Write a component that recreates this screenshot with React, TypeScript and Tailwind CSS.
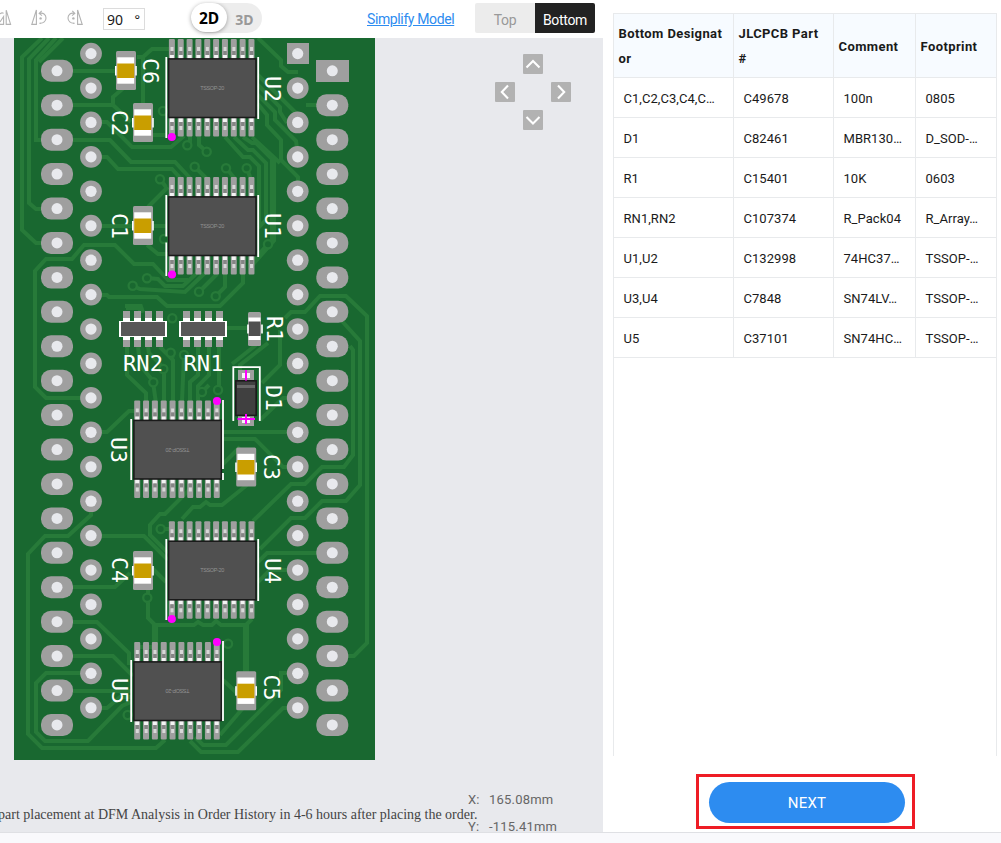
import React from "react";

const PITCH = 34.43;
const rows20 = Array.from({ length: 20 }, (_, i) => i);
const pins10 = Array.from({ length: 10 }, (_, i) => i);

const TRACES = [
  "42,38 22,57 22,230 36,243 45,243",
  "49,38 29,59 29,203 36,209 45,209",
  "56,38 36,60 36,140 45,140",
  "63,38 39,62",
  "73,71 116,71",
  "73,105 113,105 113,97 126,86",
  "113,105 131,122",
  "137,57 143,57 152,49 172,49",
  "143,57 143,103",
  "150,135 166,135",
  "101,122 107,122 132,147 171,147 184,136",
  "73,140 110,140 131,162 175,162 190,178",
  "101,157 107,157 118,169 172,169 182,180",
  "190,136 190,145",
  "199,137 199,145 206,151",
  "195,167 208,180",
  "226,168 236,180",
  "247,168 251,180",
  "160,179 166,187",
  "258,38 281,60 281,66 288,72 298,72",
  "258,75 297,114 298,122",
  "258,85 280,107 280,112 287,123",
  "258,95 275,112 275,120 296,141 298,155",
  "258,104 267,115 267,125 281,140 281,160 298,177 298,190",
  "252,137 280,163",
  "225,137 243,157 250,157 259,166 259,225",
  "234,137 248,150 253,150 266,163 266,220 258,228",
  "243,137 252,143 256,143 271,158",
  "101,226 133,226",
  "152,226 166,226",
  "148,207 168,187",
  "147,245 158,254 168,254",
  "85,398 46,398 35,387 35,271 46,259 72,259 84,245 115,245 134,264 153,264 168,280 188,280",
  "147,278 158,279 165,286 183,286 198,272",
  "133,286 140,289 185,292 206,272",
  "91,295 107,295 109,297 157,297 167,306 220,306 243,283 243,272",
  "199,292 217,274",
  "216,296 225,287 225,272",
  "268,244 273,240",
  "227,328 248,328",
  "285,318 291,312 305,312 320,296 346,296 367,316 367,643 354,656 340,656",
  "280,330 280,365 262,383",
  "268,343 240,365 240,375",
  "256,345 232,364",
  "341,320 360,341 360,485 346,501 322,501 305,518 291,518 260,549",
  "350,346 353,350 353,455 344,467 322,467 305,484 291,484 253,521",
  "223,432 297,432",
  "223,439 255,439 283,467 297,467",
  "297,398 283,398 260,420",
  "223,464 240,447",
  "101,432 107,432 129,411 140,411",
  "91,501 91,515 68,536 45,536 28,554 28,734 42,748 156,748 165,740",
  "101,536 144,536 168,560",
  "190,489 165,514 160,514 150,525 150,535 168,553",
  "247,485 222,505 210,505 206,502 200,507 193,507 182,519",
  "161,529 172,529",
  "73,587 115,587 130,573",
  "73,622 97,622 129,653 129,665",
  "73,656 113,656 133,676",
  "91,673 46,673 36,683 36,732 45,741 88,741 122,706 131,702",
  "73,691 131,691",
  "91,708 107,708 120,697 131,697",
  "148,590 148,618 155,625 194,625 198,622 203,625 212,625 216,621 221,625 246,625 252,619",
  "152,568 166,582",
  "297,673 281,673 281,690 226,745 203,745 195,737",
  "297,708 283,708 238,752 201,752 190,741",
  "258,562 267,553 320,553",
  "297,570 270,570 258,582",
  "220,735 243,708",
  "223,680 240,696",
  "136,647 156,647",
  "127,347 127,375 146,393 146,401",
  "138,347 140,365 153,381",
  "153,382 155.7,401",
  "148,347 149,353 164,368 164,401",
  "160,347 173,360 173,401",
  "171,353 173,358",
  "184,355 182,401",
  "198,347 198,375 190,382 190,401",
  "209,347 209,375 198,386 198,401",
  "219,347 219,390",
  "202,392 209,385",
  "125,306 140,306",
  "306,105 318,105",
];

const WIDE_TRACES = [
  "155,625 155,645",
  "246,625 246,672",
  "273,157 273,240 250,266",
  "126,307 140,307 142,313",
];

const VIAS: [number, number][] = [
  [163, 111], [187.3, 145.3], [206.7, 151.7], [194.7, 166.7], [226, 168.3], [246.7, 168.3],
  [160, 179.3], [164, 239], [268, 244.3], [147, 278.3], [132.7, 285.7], [199, 291.7],
  [215.7, 296.3], [172.3, 318.3], [170.7, 352.7], [163.3, 369], [153.3, 382.3], [202, 392],
  [218, 390], [184, 355], [160.7, 529], [147.3, 597.7], [228, 643.7], [127.7, 715],
];

function Oval({ cx, cy }: { cx: number; cy: number }) {
  return (
    <g>
      <rect x={cx - 16} y={cy - 11} width={32} height={22} rx={10} fill="#9f9f9f" />
      <circle cx={cx} cy={cy} r={5.5} fill="#e8e9ed" />
    </g>
  );
}

function Round({ cx, cy }: { cx: number; cy: number }) {
  return (
    <g>
      <circle cx={cx} cy={cy} r={10.9} fill="#9f9f9f" />
      <circle cx={cx} cy={cy} r={5.6} fill="#e8e9ed" />
    </g>
  );
}

function Chip({ x, y, flip }: { x: number; y: number; flip?: boolean }) {
  const cx = x + 44.2;
  return (
    <g>
      {pins10.map((i) => {
        const px = x + 0.9 + i * 8.84;
        return (
          <g key={i}>
            <rect x={px} y={y} width={6} height={20} rx={1} fill="#9f9f9f" />
            <rect x={px + 1.6} y={y + 8} width={3} height={4} fill="#d8d8d8" />
            <rect x={px + 1.6} y={y + 12} width={3} height={4} fill="#858585" />
            <rect x={px + 1} y={y + 16} width={4} height={4} fill="#f4f4f4" />
            <rect x={px} y={y + 78} width={6} height={19.5} rx={1} fill="#9f9f9f" />
            <rect x={px + 1} y={y + 78} width={4} height={5} fill="#f4f4f4" />
            <rect x={px + 1.6} y={y + 83} width={3} height={4} fill="#858585" />
            <rect x={px + 1.6} y={y + 87} width={3} height={4} fill="#d8d8d8" />
          </g>
        );
      })}
      <rect x={x + 0.6} y={y + 19.9} width={87.4} height={58.6} fill="#505050" stroke="#1a1a1a" strokeWidth={1.6} />
      <text
        x={cx}
        y={y + 51}
        textAnchor="middle"
        fontSize={5.5}
        textLength={24}
        fill="#929292"
        fontFamily="Liberation Sans, sans-serif"
        transform={flip ? `rotate(180 ${cx} ${y + 49})` : undefined}
      >
        TSSOP-20
      </text>
    </g>
  );
}

function Cap({ cx, cy }: { cx: number; cy: number }) {
  return (
    <g>
      <rect x={cx - 10} y={cy - 19.5} width={20} height={39} rx={1.5} fill="#9f9f9f" />
      <rect x={cx - 8.8} y={cy - 13.2} width={17} height={26.4} fill="#fff" />
      <rect x={cx - 8.8} y={cy - 7} width={17} height={14.5} fill="#c99e00" />
      <rect x={cx - 11} y={cy - 4.5} width={1.6} height={9.5} fill="#fff" />
      <rect x={cx + 9.2} y={cy - 4.5} width={1.6} height={9.5} fill="#fff" />
    </g>
  );
}

function ResistorPack({ x }: { x: number }) {
  return (
    <g shapeRendering="crispEdges">
      {[3.7, 14.7, 25.7, 36.7].map((d) => (
        <rect key={d} x={x + d} y={311} width={7} height={36} fill="#9f9f9f" />
      ))}
      <rect x={x} y={321} width={47.5} height={16} fill="#fff" />
      {[3.7, 14.7, 25.7, 36.7].map((d) => (
        <rect key={d} x={x + d} y={318} width={7} height={22} fill="#fff" />
      ))}
      <rect x={x + 1.6} y={322} width={44.2} height={14} fill="#585858" />
    </g>
  );
}

const LABELS: { t: string; x: number; y: number; flat?: boolean }[] = [
  { t: "C6", x: 150.5, y: 71 },
  { t: "C2", x: 119.5, y: 123 },
  { t: "U2", x: 272.5, y: 89 },
  { t: "U1", x: 272.5, y: 226 },
  { t: "C1", x: 119.5, y: 226 },
  { t: "R1", x: 274.5, y: 329 },
  { t: "RN2", x: 143, y: 363.5, flat: true },
  { t: "RN1", x: 203.5, y: 363.5, flat: true },
  { t: "D1", x: 273.5, y: 398 },
  { t: "U3", x: 118, y: 450 },
  { t: "C3", x: 271, y: 467 },
  { t: "C4", x: 119.5, y: 570 },
  { t: "U4", x: 272.5, y: 571 },
  { t: "U5", x: 119.5, y: 691 },
  { t: "C5", x: 271, y: 687.5 },
];

function Board() {
  return (
    <svg className="block" width={361} height={722} viewBox="14 38 361 722">
      <rect x={14} y={38} width={361} height={722} fill="#196830" />
      <g fill="none" stroke="#277a39" strokeWidth={4}>
        {TRACES.map((p) => (
          <polyline key={p} points={p} />
        ))}
        {WIDE_TRACES.map((p) => (
          <polyline key={p} points={p} strokeWidth={6.2} />
        ))}
      </g>
      {VIAS.map(([x, y]) => (
        <circle key={`${x}-${y}`} cx={x} cy={y} r={4.1} fill="#196830" stroke="#277a39" strokeWidth={2.3} />
      ))}

      {rows20.map((i) => (
        <g key={i}>
          <Oval cx={57} cy={70.8 + i * PITCH} />
          <Round cx={91} cy={53.6 + i * PITCH} />
          {i > 0 && <Oval cx={332.3} cy={70.8 + i * PITCH} />}
          {i > 0 && <Round cx={297.7} cy={53.6 + i * PITCH} />}
        </g>
      ))}
      <rect x={316} y={60} width={33} height={22} fill="#9f9f9f" />
      <circle cx={332.3} cy={70.8} r={5.5} fill="#e8e9ed" />
      <rect x={287} y={43} width={22} height={21} fill="#9f9f9f" />
      <circle cx={297.7} cy={53.6} r={5.6} fill="#e8e9ed" />

      <Chip x={168} y={39} />
      <Chip x={168} y={177} />
      <Chip x={133.3} y={400.5} flip />
      <Chip x={168} y={521.3} />
      <Chip x={133.3} y={642} flip />

      <g stroke="#fff" strokeWidth={1.8} fill="none">
        <path d="M166.3 57V138M258.2 57V119" />
        <path d="M166.3 195V236.5M166.3 242.5V276M258.2 195V257" />
        <path d="M131.2 419V480M223 400V469M223 473V480" />
        <path d="M166.3 539V620M258.2 539V601" />
        <path d="M131.2 660V722M223 641V721" />
      </g>

      <Cap cx={126} cy={70.5} />
      <Cap cx={143} cy={122.5} />
      <Cap cx={143} cy={225.5} />
      <Cap cx={246.2} cy={467} />
      <Cap cx={143} cy={570.5} />
      <Cap cx={246.2} cy={690.7} />

      <ResistorPack x={119.3} />
      <ResistorPack x={179.3} />

      <rect x={248} y={312} width={13} height={34} rx={1.5} fill="#9f9f9f" />
      <rect x={248.5} y={317.5} width={12} height={22.5} fill="#fff" />
      <rect x={248.5} y={321.5} width={12} height={14.5} fill="#505050" />
      <path d="M248 324.5V333.5M262 324.5V333.5" stroke="#fff" strokeWidth={1.7} />

      <path d="M233.3 421V367.2H259.8V421" fill="none" stroke="#fff" strokeWidth={1.8} />
      <rect x={238} y={370} width={16} height={11} fill="#9f9f9f" />
      <rect x={238} y={414} width={16} height={12} fill="#9f9f9f" />
      <rect x={242} y={373} width={8} height={5} fill="#f4f4f4" />
      <rect x={242} y={417} width={8} height={6} fill="#f4f4f4" />
      <rect x={235.8} y={380.8} width={20.4} height={34.6} fill="#404040" stroke="#1a1a1a" strokeWidth={1.6} />
      <rect x={237} y={385} width={18} height={3} fill="#696969" />
      <path d="M246 370V380.5M246 414V424M237.5 419H255" stroke="#ff00ff" strokeWidth={2} />

      {[[171.8, 137], [172, 274.5], [217, 401], [171.8, 619], [217, 642]].map(([x, y]) => (
        <circle key={`${x}-${y}`} cx={x} cy={y} r={4.1} fill="#ff00ff" />
      ))}

      {LABELS.map((l) => (
        <text
          key={l.t}
          x={l.x}
          y={l.y + 7.4}
          textAnchor="middle"
          fontSize={20.5}
          textLength={l.flat ? 40 : 26}
          lengthAdjust="spacingAndGlyphs"
          fill="#fff"
          fontFamily="DejaVu Sans Mono, monospace"
          transform={l.flat ? undefined : `rotate(90 ${l.x} ${l.y})`}
        >
          {l.t}
        </text>
      ))}
    </svg>
  );
}

function RotateIcon({ mirrored }: { mirrored?: boolean }) {
  return (
    <svg
      className={mirrored ? "block -scale-x-100" : "block"}
      width={16}
      height={18}
      viewBox="0 0 16 18"
      fill="none"
      stroke="#b3b3b3"
      strokeWidth={1.1}
    >
      <path d="M5.4 1V15.4H0.8Z" />
      <path d="M8.6 4.4C12 3.3 15 5.6 15 9C15 12.3 12.3 14.4 9 14.2" />
      <path d="M10.7 1.9L8.2 4.5L11 6.6M8.3 14.2H9.8" />
      <circle cx={9.6} cy={9.4} r={1.2} fill="#b3b3b3" stroke="none" />
    </svg>
  );
}

function MirrorIcon() {
  return (
    <svg className="block" width={12} height={18} viewBox="0 0 12 18" fill="none" stroke="#b3b3b3" strokeWidth={1.1}>
      <path d="M6.2 1.2V15.4H10.6Z" />
      <path d="M0 15.4H3.6V7.5L0 13M0 5C1 3.8 2 3.6 3.6 4.2" />
    </svg>
  );
}

function Arrow({ d }: { d: string }) {
  return (
    <div className="flex h-5 w-5 items-center justify-center rounded-[1px] bg-[#b2b2b2]">
      <svg width={20} height={20} viewBox="0 0 20 20" fill="none" stroke="#fff" strokeWidth={2.1}>
        <path d={d} />
      </svg>
    </div>
  );
}

const HEAD = [["Bottom Designat", "or"], ["JLCPCB Part", "#"], ["Comment"], ["Footprint"]];
const PARTS = [
  ["C1,C2,C3,C4,C…", "C49678", "100n", "0805"],
  ["D1", "C82461", "MBR130…", "D_SOD-…"],
  ["R1", "C15401", "10K", "0603"],
  ["RN1,RN2", "C107374", "R_Pack04", "R_Array…"],
  ["U1,U2", "C132998", "74HC37…", "TSSOP-…"],
  ["U3,U4", "C7848", "SN74LV…", "TSSOP-…"],
  ["U5", "C37101", "SN74HC…", "TSSOP-…"],
];

export default function App() {
  return (
    <div className="flex h-[843px] w-[1001px] flex-col overflow-hidden bg-white font-[Roboto,sans-serif] text-[#1a1a1a]">
      <div className="flex h-[832px]">
        <div className="flex w-[603px] flex-col">
          <div className="flex h-[38px] shrink-0 items-start">
            <div className="flex h-[38px] w-[103px] pt-[9px]">
              <div className="w-[31px]">
                <MirrorIcon />
              </div>
              <div className="w-[36px]">
                <RotateIcon />
              </div>
              <RotateIcon mirrored />
            </div>
            <div className="mt-2 flex h-[22px] w-[42px] items-center justify-between border border-[#dcdcdc] pr-[4px] pl-[3px] font-['Noto_Sans',sans-serif] text-[14px] leading-5">
              <span className="pt-0.5">90</span>
              <span className="text-[13px]">°</span>
            </div>
            <div className="mt-[3px] ml-[46px] flex h-[30px] w-[71px] rounded-full bg-[#ededed] font-['Noto_Sans',sans-serif] text-[15.5px] font-bold">
              <div className="flex h-[29px] w-9 items-center justify-center rounded-full bg-white pt-0.5 text-black shadow-[0_1px_4px_rgba(0,0,0,0.35)]">
                2D
              </div>
              <div className="flex h-[30px] w-[35px] items-center justify-center pt-0.5 text-[14px] text-[#999]">3D</div>
            </div>
            <a className="mt-[9px] ml-[105px] w-[108px] text-[14px] leading-5 tracking-[-0.38px] whitespace-nowrap text-[#2d8cf0] underline">
              Simplify Model
            </a>
            <div className="mt-[3px] flex h-[30px] w-[120px] overflow-hidden rounded-[2px] text-[14px] tracking-[-0.3px]">
              <div className="flex w-[60px] items-center justify-center bg-[#ececec] pt-[5px] text-[#999]">Top</div>
              <div className="flex w-[60px] items-center justify-center bg-[#222] pt-[5px] text-white">Bottom</div>
            </div>
          </div>

          <div className="relative h-[794px] overflow-hidden bg-[#e8e9ed] pl-[14px]">
            <Board />
            <div className="absolute top-4 left-[495px] grid grid-cols-[20px_20px_20px] gap-2">
              <span />
              <Arrow d="M3.5 13.5L10 7L16.5 13.5" />
              <span />
              <Arrow d="M13 3.5L6.8 10L13 16.5" />
              <span />
              <Arrow d="M7 3.5L13.2 10L7 16.5" />
              <span />
              <Arrow d="M3.5 7L10 13.5L16.5 7" />
            </div>
            <div className="absolute top-[767px] left-[-2px] whitespace-nowrap font-['Liberation_Serif',serif] text-[14px] leading-5 text-[#444]">
              part placement at DFM Analysis in Order History in 4-6 hours after placing the order.
            </div>
            <div className="absolute top-[748px] left-[468px] grid grid-cols-[21px_auto] text-[13px] leading-[27px] tracking-[0.2px] text-[#666]">
              <span>X:</span>
              <span>165.08mm</span>
              <span>Y:</span>
              <span>-115.41mm</span>
            </div>
          </div>
        </div>

        <div className="flex w-[398px] flex-col pt-[13px] pl-[10px]">
          <div className="h-[743px] w-[384px] shrink-0 border-t border-r border-l border-[#e8eaec] text-[13px]">
            <div className="grid h-[64px] grid-cols-[120px_100px_82px_80px] border-b border-[#e8eaec] bg-[#f7fbff] font-bold">
              {HEAD.map((lines, i) => (
                <div
                  key={lines[0]}
                  className={
                    "flex flex-col justify-center pt-px pl-[4.5px] leading-[25px] tracking-[0.4px] whitespace-nowrap" +
                    (i < 3 ? " border-r border-[#e8eaec]" : "")
                  }
                >
                  {lines.map((line) => (
                    <span key={line}>{line}</span>
                  ))}
                </div>
              ))}
            </div>
            {PARTS.map((r) => (
              <div key={r[0]} className="grid h-10 grid-cols-[120px_100px_82px_80px] border-b border-[#e8eaec]">
                {r.map((c, i) => (
                  <div
                    key={i}
                    className={
                      "flex items-center overflow-hidden pt-0.5 pl-[9.5px] tracking-[0.05px] whitespace-nowrap" +
                      (i < 3 ? " border-r border-[#e8eaec]" : "")
                    }
                  >
                    {c}
                  </div>
                ))}
              </div>
            ))}
          </div>
          <div className="mt-[18px] ml-[83px] flex h-[55px] w-[219px] shrink-0 items-start justify-center border-[3px] border-[#ee1c25] pt-[5px] pl-[3px]">
            <div className="flex h-[41px] w-[196px] items-center justify-center rounded-full bg-[#2d8cf0] pt-px text-[15px] tracking-[0.2px] text-white">
              NEXT
            </div>
          </div>
        </div>
      </div>
      <div className="h-[11px] border-t border-[#dfe0e4] bg-[#f9f9fc]" />
    </div>
  );
}
